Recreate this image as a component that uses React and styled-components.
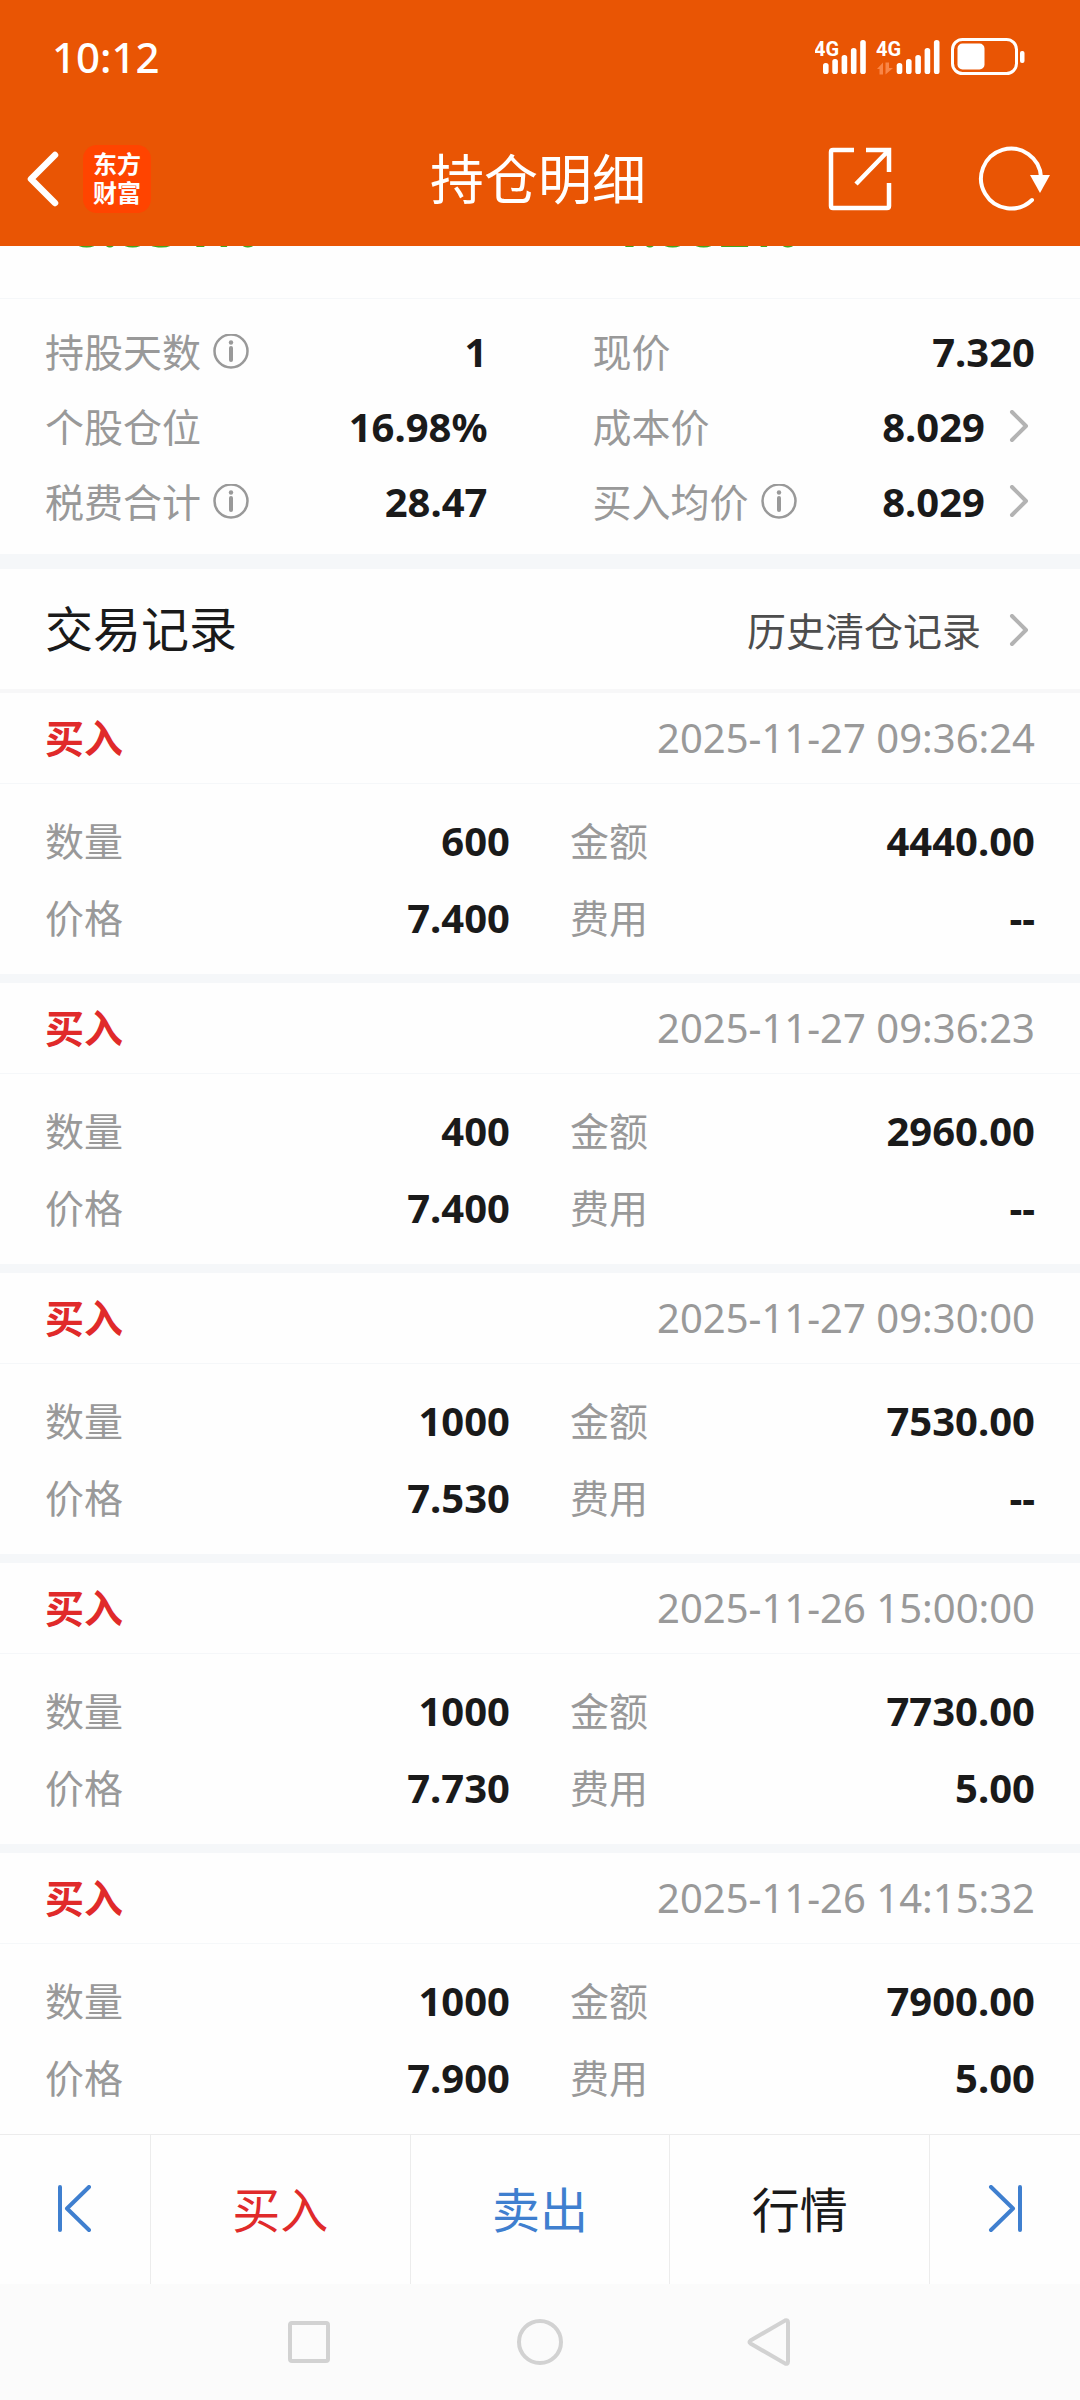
import React from "react";
import styled, { createGlobalStyle, css } from "styled-components";

const color = {
  brand: "#e95504",
  logo: "#ff4400",
  ink: "#1a1a1a",
  soft: "#4d4d4d",
  mute: "#999999",
  faint: "#b3b3b3",
  red: "#e02a2a",
  blue: "#3f7fcf",
  green: "#3fa81e",
  band: "#f5f7f9",
  line: "#ececec",
  nav: "#d2d2d2",
};

const GlobalStyle = createGlobalStyle`
  *, *::before, *::after { box-sizing: border-box; }
  body {
    margin: 0;
    background: #fefefe;
    color: ${color.ink};
    font-family: "Noto Sans", "Noto Sans CJK SC", sans-serif;
    font-size: 39px;
    line-height: 48px;
  }
  h1, h2, h3, p, dl, dt, dd, ul { margin: 0; padding: 0; font-weight: 400; }
  button { border: 0; padding: 0; background: none; color: inherit; font: inherit; cursor: pointer; }
  a { color: inherit; text-decoration: none; }
  svg { display: block; flex: none; }
`;

const Screen = styled.div`
  min-height: 100vh;
  display: flex;
  flex-direction: column;
`;

const Header = styled.header`
  position: relative;
  z-index: 1;
  background: ${color.brand};
  color: #fff;
`;

const StatusBar = styled.div`
  display: flex;
  justify-content: space-between;
  align-items: center;
  height: 112px;
  padding: 2px 53px 0 52px;
`;

const Clock = styled.time`
  font-size: 42px;
  font-weight: 500;
`;

const TitleBar = styled.div`
  display: grid;
  grid-template-columns: 1fr auto 1fr;
  align-items: center;
  height: 134px;
  padding: 0 30px 0 26px;
`;

const Group = styled.div`
  display: flex;
  align-items: center;
  justify-content: ${(p) => (p.$end ? "flex-end" : "flex-start")};
  gap: ${(p) => (p.$end ? "86px" : "24px")};
`;

const Title = styled.h1`
  font-size: 54px;
  line-height: 72px;
`;

const Logo = styled.a`
  display: grid;
  place-content: center;
  width: 68px;
  height: 68px;
  border-radius: 14px;
  background: ${color.logo};
  font-family: "Liberation Sans", "Noto Sans CJK SC", sans-serif;
  font-size: 24px;
  font-weight: 700;
  line-height: 29px;
`;

const Returns = styled.div`
  display: grid;
  grid-template-columns: 1fr 1fr;
  margin-top: -54px;
  padding-bottom: 38px;
  border-bottom: 1px solid ${color.band};
`;

const Return = styled.p`
  padding-left: 54px;
  color: ${color.green};
  font-size: 54px;
  font-weight: 700;
  line-height: 68px;
`;

const Stats = styled.dl`
  display: grid;
  grid-template-columns: 1fr 1fr;
  column-gap: 105px;
  padding: 15px 45px;
  border-bottom: 15px solid ${color.band};
`;

const Fields = styled.dl`
  display: grid;
  grid-template-columns: 1fr 1fr;
  column-gap: 60px;
  padding: 18px 45px;
`;

const Field = styled.div`
  display: flex;
  align-items: center;
  justify-content: space-between;
  height: ${(p) => (p.$roomy ? "77px" : "75px")};
`;

const Label = styled.dt`
  display: flex;
  align-items: center;
  gap: 12px;
  color: ${color.mute};
`;

const Value = styled.dd`
  display: flex;
  align-items: center;
  font-size: 40px;
  font-weight: 700;
`;

const Go = styled.button`
  display: flex;
  align-items: center;
  gap: 24px;
  padding-right: 6px;
`;

const SectionHead = styled.div`
  display: flex;
  align-items: center;
  justify-content: space-between;
  height: 124px;
  padding: 0 45px;
  border-bottom: 4px solid #f7f7f8;
`;

const SectionTitle = styled.h2`
  font-size: 48px;
`;

const HistoryLink = styled.a`
  display: flex;
  align-items: center;
  gap: 28px;
  padding: 4px 6px 0 0;
  color: ${color.soft};
`;

const Records = styled.ul`
  list-style: none;
`;

const Record = styled.li`
  & + & {
    border-top: 9px solid ${color.band};
  }
`;

const RecordHead = styled.div`
  display: flex;
  align-items: center;
  justify-content: space-between;
  height: 91px;
  padding: 0 45px;
  border-bottom: 1px solid ${color.band};
`;

const Side = styled.h3`
  color: ${color.red};
  font-size: 39px;
  font-weight: 700;
`;

const Stamp = styled.time`
  color: ${color.mute};
  font-size: 40px;
`;

const Actions = styled.div`
  display: grid;
  grid-template-columns: 150px 1fr 1fr 1fr 151px;
  height: 150px;
  margin-top: auto;
  border-top: 1px solid ${color.line};
`;

const tones = {
  buy: css`color: ${color.red};`,
  sell: css`color: ${color.blue};`,
  plain: css`color: ${color.ink};`,
};

const Action = styled.button`
  display: grid;
  place-items: center;
  font-size: 48px;
  ${(p) => tones[p.$tone]}
  & + & {
    border-left: 1px solid ${color.line};
  }
`;

const SystemNav = styled.nav`
  display: flex;
  justify-content: center;
  height: 116px;
  background: #fbfbfb;
`;

const NavButton = styled.button`
  display: grid;
  place-items: center;
  width: 230px;
`;

const signalTops = [23, 19, 15, 8, 0];

function Bars({ x }) {
  return signalTops.map((top, i) => (
    <rect key={top} x={x + i * 9.3} y={2 + top} width="5.6" height={34 - top} rx="2.6" fill="#fff" />
  ));
}

function StatusIcons() {
  return (
    <svg width="212" height="38" viewBox="0 0 212 38" aria-label="信号与电量">
      <g fill="#fff" fontFamily="Roboto, sans-serif" fontSize="20" fontWeight="700">
        <text x="-1" y="18">4G</text>
        <text x="61" y="18">4G</text>
      </g>
      <Bars x={8} />
      <Bars x={81.7} />
      <g fill="#f98648">
        <path d="M62 31l6-6.500v12h-3.500v-5.500z" />
        <path d="M70.500 24.500h3.500v5.500h4l-7.500 6.500z" />
      </g>
      <rect x="137.500" y="1.500" width="64" height="34" rx="10" fill="none" stroke="#fff" strokeWidth="3" />
      <rect x="142.500" y="5.500" width="27" height="26" rx="5" fill="#fff" />
      <rect x="205" y="13" width="4.500" height="12" rx="2" fill="#fff" />
    </svg>
  );
}

function BackIcon() {
  return (
    <svg width="33" height="56" viewBox="0 0 33 56" fill="none" stroke="#fff" strokeWidth="6.500" strokeLinecap="round" strokeLinejoin="round">
      <path d="M29 4L5 28l24 24" />
    </svg>
  );
}

function ShareIcon() {
  return (
    <svg width="64" height="64" viewBox="0 0 64 64" fill="none" stroke="#fff" strokeWidth="4.500">
      <path d="M26 3H5Q3 3 3 5V59Q3 61 5 61H59Q61 61 61 59V36M38 3H61V25M61 3L28 37" />
    </svg>
  );
}

function RefreshIcon() {
  return (
    <svg width="72" height="66" viewBox="0 0 72 66" fill="none" stroke="#fff" strokeWidth="4">
      <path d="M63 31A30 30 0 1 0 54 54" strokeLinecap="round" />
      <path d="M52 29h20l-10 18z" fill="#fff" stroke="none" />
    </svg>
  );
}

function InfoIcon() {
  return (
    <svg width="36" height="36" viewBox="0 0 36 36" fill="none" stroke={color.mute} strokeWidth="2.500">
      <circle cx="18" cy="17" r="16.500" />
      <path d="M18 14v12" strokeWidth="4" strokeLinecap="round" />
      <circle cx="18" cy="8.500" r="2.200" fill={color.mute} stroke="none" />
    </svg>
  );
}

function Chevron() {
  return (
    <svg width="20" height="34" viewBox="0 0 20 34" fill="none" stroke={color.faint} strokeWidth="4" strokeLinecap="round" strokeLinejoin="round">
      <path d="M3 2l14 14L3 30" />
    </svg>
  );
}

function EdgeIcon({ last }) {
  return (
    <svg width="34" height="50" viewBox="0 0 34 50" fill="none" stroke={color.blue} strokeWidth="4" strokeLinecap="round" strokeLinejoin="round">
      <path d={last ? "M32 2v43M3 2l22 21.500L3 45" : "M2 2v43M31 2L9 23.500L31 45"} />
    </svg>
  );
}

const navShapes = {
  最近任务: <rect x="4" y="5" width="38" height="38" rx="2" />,
  主屏幕: <circle cx="24" cy="24" r="21" />,
  返回: <path d="M4.500 22.500L39 2.500Q42 1.500 42 4.500V43.500Q42 46.500 39 45.500L4.500 25.500Q2.500 24 4.500 22.500Z" />,
};

const stats = [
  { label: "持股天数", info: true, value: "1" },
  { label: "现价", value: "7.320" },
  { label: "个股仓位", value: "16.98%" },
  { label: "成本价", value: "8.029", link: true },
  { label: "税费合计", info: true, value: "28.47" },
  { label: "买入均价", info: true, value: "8.029", link: true },
];

const records = [
  { time: "2025-11-27 09:36:24", qty: "600", amount: "4440.00", price: "7.400", fee: "--" },
  { time: "2025-11-27 09:36:23", qty: "400", amount: "2960.00", price: "7.400", fee: "--" },
  { time: "2025-11-27 09:30:00", qty: "1000", amount: "7530.00", price: "7.530", fee: "--" },
  { time: "2025-11-26 15:00:00", qty: "1000", amount: "7730.00", price: "7.730", fee: "5.00" },
  { time: "2025-11-26 14:15:32", qty: "1000", amount: "7900.00", price: "7.900", fee: "5.00" },
];

function StatField({ label, info, value, link }) {
  return (
    <Field>
      <Label>
        {label}
        {info && <InfoIcon />}
      </Label>
      <Value>
        {link ? (
          <Go type="button">
            {value}
            <Chevron />
          </Go>
        ) : (
          value
        )}
      </Value>
    </Field>
  );
}

function RecordField({ label, value }) {
  return (
    <Field $roomy>
      <Label>{label}</Label>
      <Value>{value}</Value>
    </Field>
  );
}

export default function App() {
  return (
    <Screen>
      <GlobalStyle />
      <Header>
        <StatusBar>
          <Clock>10:12</Clock>
          <StatusIcons />
        </StatusBar>
        <TitleBar>
          <Group>
            <button type="button" aria-label="返回上一页">
              <BackIcon />
            </button>
            <Logo href="#home">
              <span>东方</span>
              <span>财富</span>
            </Logo>
          </Group>
          <Title>持仓明细</Title>
          <Group $end>
            <button type="button" aria-label="分享">
              <ShareIcon />
            </button>
            <button type="button" aria-label="刷新">
              <RefreshIcon />
            </button>
          </Group>
        </TitleBar>
      </Header>

      <main>
        <Returns>
          <Return>-8.834%</Return>
          <Return>-1.882%</Return>
        </Returns>
        <Stats>
          {stats.map((s) => (
            <StatField key={s.label} {...s} />
          ))}
        </Stats>

        <SectionHead>
          <SectionTitle>交易记录</SectionTitle>
          <HistoryLink href="#history">
            历史清仓记录
            <Chevron />
          </HistoryLink>
        </SectionHead>

        <Records>
          {records.map((r) => (
            <Record key={r.time}>
              <RecordHead>
                <Side>买入</Side>
                <Stamp>{r.time}</Stamp>
              </RecordHead>
              <Fields>
                <RecordField label="数量" value={r.qty} />
                <RecordField label="金额" value={r.amount} />
                <RecordField label="价格" value={r.price} />
                <RecordField label="费用" value={r.fee} />
              </Fields>
            </Record>
          ))}
        </Records>
      </main>

      <Actions>
        <Action type="button" $tone="sell" aria-label="上一只">
          <EdgeIcon />
        </Action>
        <Action type="button" $tone="buy">买入</Action>
        <Action type="button" $tone="sell">卖出</Action>
        <Action type="button" $tone="plain">行情</Action>
        <Action type="button" $tone="sell" aria-label="下一只">
          <EdgeIcon last />
        </Action>
      </Actions>

      <SystemNav>
        {Object.entries(navShapes).map(([name, shape]) => (
          <NavButton key={name} type="button" aria-label={name}>
            <svg width="48" height="48" viewBox="0 0 48 48" fill="none" stroke={color.nav} strokeWidth="4">
              {shape}
            </svg>
          </NavButton>
        ))}
      </SystemNav>
    </Screen>
  );
}
